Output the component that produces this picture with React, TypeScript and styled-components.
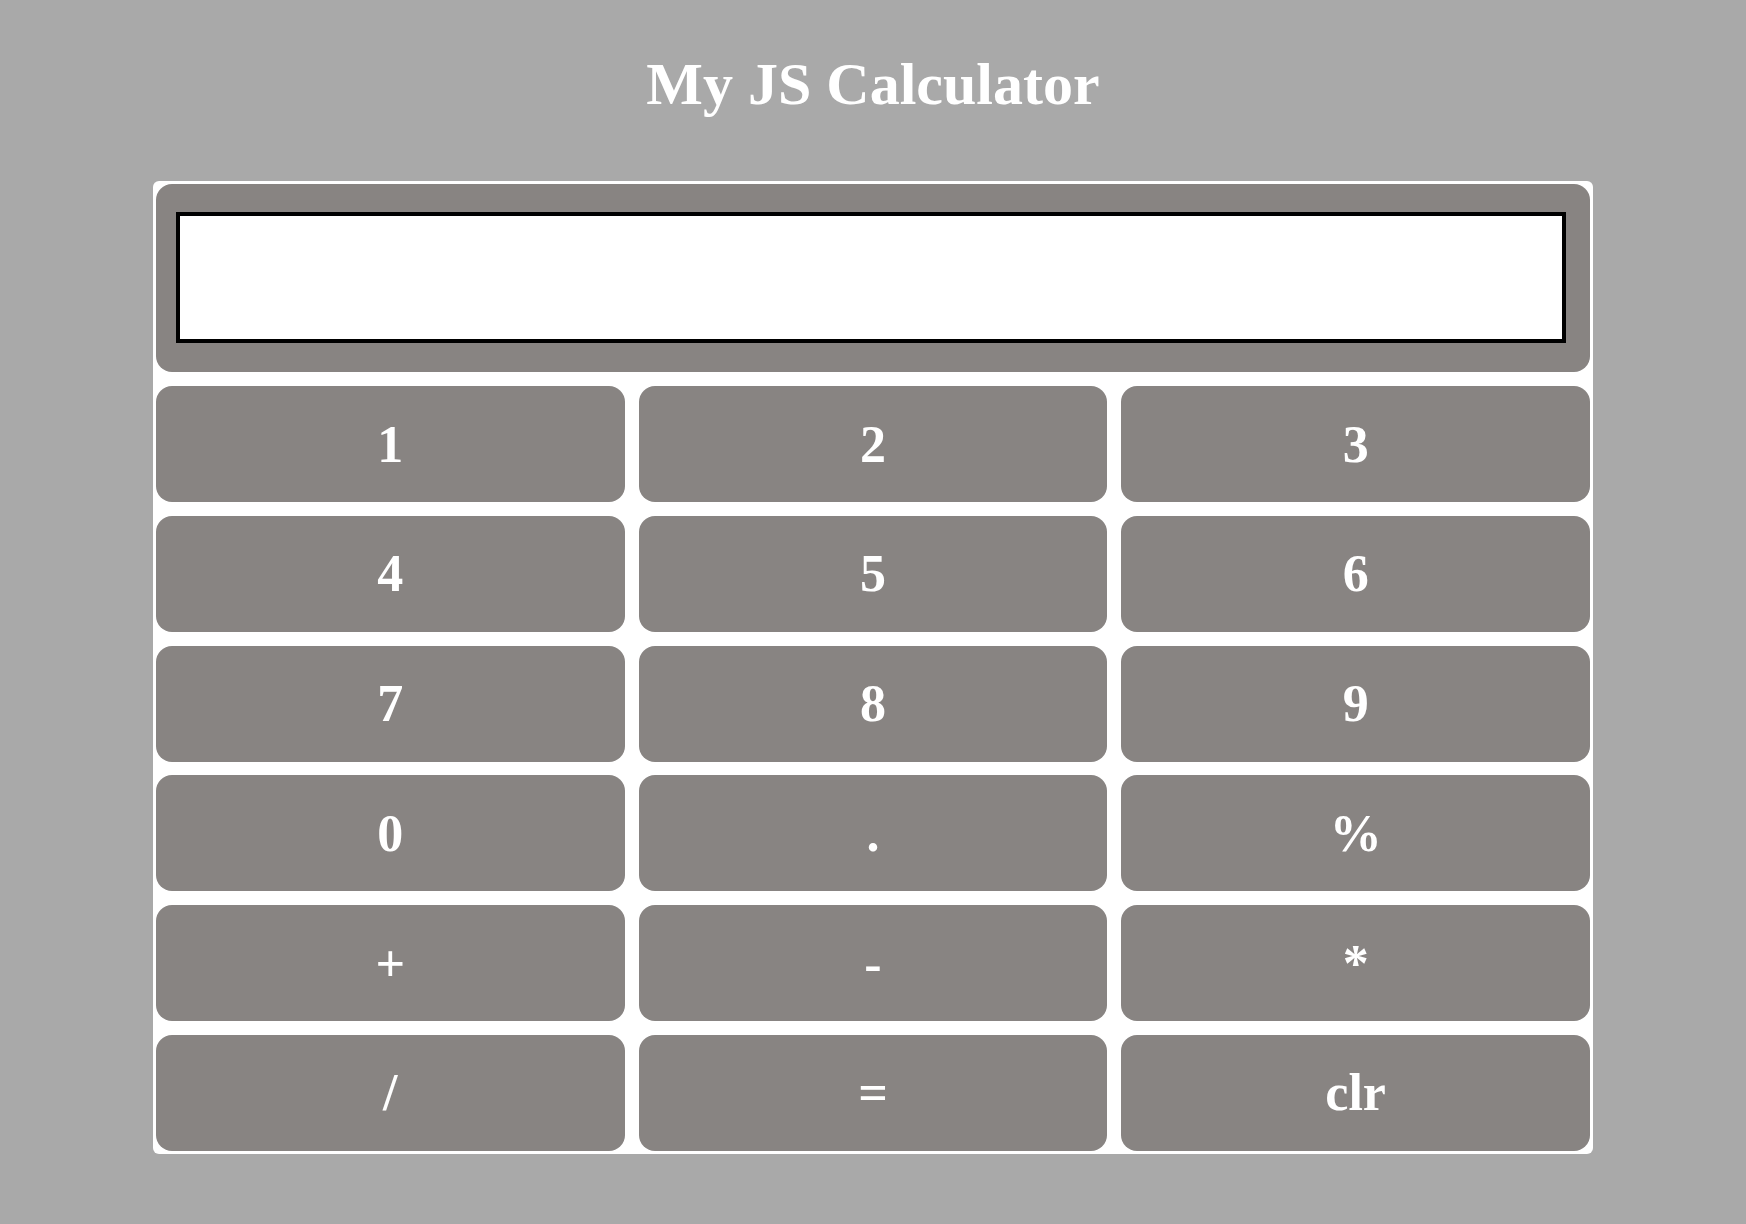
import React from "react";
import styled, { createGlobalStyle } from "styled-components";

const GlobalStyle = createGlobalStyle`
  html, body {
    margin: 0;
    padding: 0;
    background: #a9a9a9;
    font-family: "Liberation Serif", "Times New Roman", serif;
  }
`;

const Page = styled.div`
  display: flex;
  flex-direction: column;
  align-items: center;
  padding-top: 54px;
  min-height: 1224px;
  box-sizing: border-box;
`;

const Title = styled.h1`
  margin: 0 0 67px 0;
  font-size: 60px;
  line-height: 60px;
  font-weight: bold;
  color: #ffffff;
  text-align: center;
`;

const Calculator = styled.div`
  width: 1440px;
  box-sizing: border-box;
  background: #ffffff;
  border-radius: 6px;
  padding: 3px;
  display: flex;
  flex-direction: column;
  gap: 14px;
`;

const Display = styled.div`
  background: #888482;
  border-radius: 16px;
  padding: 28px 24px 29px 20px;
  display: flex;
`;

const Screen = styled.input`
  flex: 1;
  height: 131px;
  box-sizing: border-box;
  border: 4px solid #000000;
  background: #ffffff;
  margin: 0;
  padding: 0 12px;
  font-family: "Liberation Serif", serif;
  font-size: 48px;
  outline: none;
`;

const Keys = styled.div`
  display: grid;
  grid-template-columns: repeat(3, 1fr);
  grid-auto-rows: 116px;
  column-gap: 14px;
  row-gap: 13.8px;
`;

const Key = styled.button`
  background: #888482;
  border: none;
  border-radius: 16px;
  color: #ffffff;
  font-family: "Liberation Serif", "Times New Roman", serif;
  font-weight: bold;
  font-size: 52px;
  display: flex;
  align-items: center;
  justify-content: center;
  padding: 0;
  cursor: pointer;
`;

const keys = ["1", "2", "3", "4", "5", "6", "7", "8", "9", "0", ".", "%", "+", "-", "*", "/", "=", "clr"];

export default function App() {
  return (
    <>
      <GlobalStyle />
      <Page>
        <Title>My JS Calculator</Title>
        <Calculator>
          <Display>
            <Screen type="text" readOnly aria-label="display" />
          </Display>
          <Keys>
            {keys.map((k) => (
              <Key key={k}>{k}</Key>
            ))}
          </Keys>
        </Calculator>
      </Page>
    </>
  );
}
